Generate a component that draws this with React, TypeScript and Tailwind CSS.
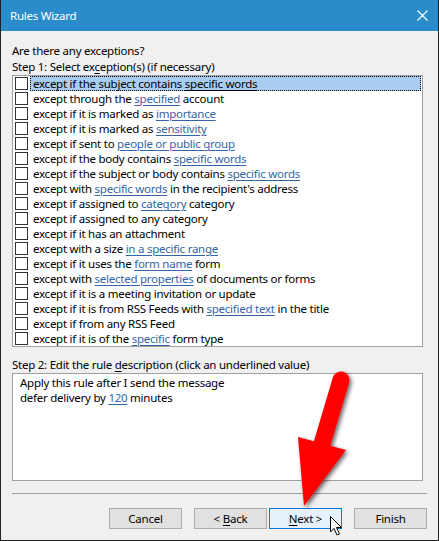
import React from 'react';

type Part = string | { link: string };

const rows: Part[][] = [
  ['except if the subject contains ', { link: 'specific words' }],
  ['except through the ', { link: 'specified' }, ' account'],
  ['except if it is marked as ', { link: 'importance' }],
  ['except if it is marked as ', { link: 'sensitivity' }],
  ['except if sent to ', { link: 'people or public group' }],
  ['except if the body contains ', { link: 'specific words' }],
  ['except if the subject or body contains ', { link: 'specific words' }],
  ['except with ', { link: 'specific words' }, " in the recipient's address"],
  ['except if assigned to ', { link: 'category' }, ' category'],
  ['except if assigned to any category'],
  ['except if it has an attachment'],
  ['except with a size ', { link: 'in a specific range' }],
  ['except if it uses the ', { link: 'form name' }, ' form'],
  ['except with ', { link: 'selected properties' }, ' of documents or forms'],
  ['except if it is a meeting invitation or update'],
  ['except if it is from RSS Feeds with ', { link: 'specified text' }, ' in the title'],
  ['except if from any RSS Feed'],
  ['except if it is of the ', { link: 'specific' }, ' form type'],
];

const Link: React.FC<{ children: React.ReactNode; selected?: boolean }> = ({ children, selected }) => (
  <span
    className={
      selected
        ? 'text-black underline decoration-1 underline-offset-[2px]'
        : 'text-[#3465a4] underline decoration-1 underline-offset-[2px]'
    }
  >
    {children}
  </span>
);

const RuleRow: React.FC<{ parts: Part[]; selected?: boolean }> = ({ parts, selected }) => (
  <div className="flex h-[15px] items-center">
    <div className="ml-[2px] h-[13px] w-[13px] shrink-0 border border-[#333333] bg-white" />
    <div
      className={
        selected
          ? 'ml-[2px] mr-[1px] h-[15px] flex-1 whitespace-nowrap border border-dotted border-black bg-[#a8cdf1] pl-[2px] leading-[13px]'
          : 'ml-[2px] mr-[1px] h-[15px] flex-1 whitespace-nowrap pl-[3px] leading-[15px]'
      }
    >
      {parts.map((p, i) =>
        typeof p === 'string' ? <span key={i}>{p}</span> : <Link key={i} selected={selected}>{p.link}</Link>
      )}
    </div>
  </div>
);

const Button: React.FC<{ children: React.ReactNode; primary?: boolean }> = ({ children, primary }) => (
  <div
    className={
      primary
        ? 'flex h-[21px] w-[73px] items-center justify-center border border-[#0078d7] bg-[#e5f1fb]'
        : 'flex h-[21px] w-[73px] items-center justify-center border border-[#adadad] bg-[#e1e1e1]'
    }
  >
    {children}
  </div>
);

export default function App() {
  return (
    <div className="relative h-[541px] w-[439px] overflow-hidden border-x border-b border-[#222222] bg-[#f0f0f0] font-['Noto_Sans','Open_Sans',sans-serif] text-[11.5px] tracking-[-0.25px] text-black">
      {/* Title bar */}
      <div className="flex h-[31px] items-center justify-between bg-[#2b8ccc] pl-[9px] pr-[9px] text-white">
        <span className="text-[11.5px]">Rules Wizard</span>
        <svg width="11" height="11" viewBox="0 0 11 11" className="mr-[1px]">
          <path d="M0.5 0.5 L10.5 10.5 M10.5 0.5 L0.5 10.5" stroke="white" strokeWidth="1.1" />
        </svg>
      </div>

      <div className="px-[11px] pt-[12px]">
        <div className="leading-[16px]">Are there any exceptions?</div>
        <div className="leading-[16px]">
          Step 1: Select ex<span className="underline underline-offset-[2px]">c</span>eption(s) (if necessary)
        </div>

        {/* Exceptions list */}
        <div className="w-[411px] border border-[#a0a0a0] bg-white">
          {rows.map((r, i) => (
            <RuleRow key={i} parts={r} selected={i === 0} />
          ))}
        </div>

        <div className="mt-[10px] leading-[16px]">
          Step 2: Edit the rule <span className="underline underline-offset-[2px]">d</span>escription (click an underlined value)
        </div>

        {/* Description box */}
        <div className="h-[108px] w-[411px] border border-[#a0a0a0] bg-white pl-[7px] pt-[1px] leading-[15px]">
          <div>Apply this rule after I send the message</div>
          <div>
            defer delivery by <Link>120</Link> minutes
          </div>
        </div>

        <div className="mt-[12px] h-px w-[415px] bg-[#a0a0a0]" />

        {/* Buttons */}
        <div className="mt-[14px] flex pl-[97px]">
          <Button>Cancel</Button>
          <div className="ml-[12px]">
            <Button>
              &lt; <span className="ml-[3px] underline underline-offset-[2px]">B</span>ack
            </Button>
          </div>
          <div className="ml-[2px]">
            <Button primary>
              <span className="underline underline-offset-[2px]">N</span>ext &gt;
            </Button>
          </div>
          <div className="ml-[12px]">
            <Button>Finish</Button>
          </div>
        </div>
      </div>

      {/* Red arrow + cursor overlay */}
      <svg className="pointer-events-none absolute left-0 top-0" width="439" height="541" viewBox="0 0 439 541">
        <defs>
          <filter id="shadow" x="-30%" y="-30%" width="160%" height="160%">
            <feDropShadow dx="2" dy="2" stdDeviation="2" floodColor="#000" floodOpacity="0.6" />
          </filter>
        </defs>
        <g filter="url(#shadow)">
          <path d="M340 380 L321 444" stroke="#ff0000" strokeWidth="17" strokeLinecap="round" />
          <polygon points="297,437 345,450 303,506" fill="#ff0000" />
        </g>
        <path
          d="M329.5 516.5 L329.5 532 L333 528.5 L336 535 L338.5 534 L335.5 527.5 L340.5 527.5 Z"
          fill="white"
          stroke="black"
          strokeWidth="1"
          strokeLinejoin="round"
        />
      </svg>
    </div>
  );
}
